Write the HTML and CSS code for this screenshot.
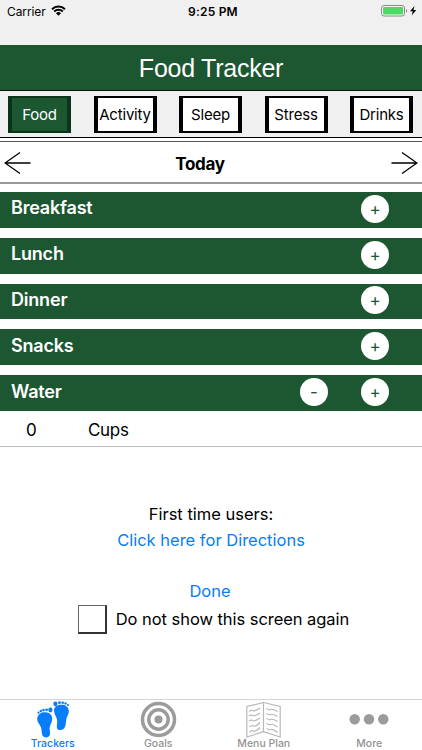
FILE: index.html
```
<!DOCTYPE html>
<html lang="en">
<head>
    <meta charset="UTF-8">
    <meta name="viewport" content="width=device-width, initial-scale=1.0">
    <title>Food Tracker</title>
    <link rel="stylesheet" href="styles.css">
</head>
<body>

    <div class="status-bar">
        <div class="carrier">
            <span>Carrier</span>
            <svg width="15" height="11" viewBox="0 0 15 11">
                <path d="M1 4.2a9.2 9.2 0 0 1 13 0M3.2 6.5a6.1 6.1 0 0 1 8.6 0" fill="none" stroke="#000" stroke-width="2"/>
                <path d="M7.5 10.7 5 8.2a3.6 3.6 0 0 1 5 0z"/>
            </svg>
        </div>
        <span class="clock">9:25 PM</span>
        <div class="battery">
            <svg width="36" height="12" viewBox="0 0 36 12">
                <rect x="0.5" y="0.5" width="23" height="10.5" rx="2.5" fill="#f8f8f8" stroke="#8a8a8a"/>
                <rect x="2" y="2" width="20" height="7.5" rx="1" fill="#4cd964"/>
                <path d="M25 4v3.6q1.2-.4 1.2-1.8T25 4z" fill="#8a8a8a"/>
                <path d="M33.5 1 29 6.3h2.8L30.7 10.5 35.3 5h-2.8z"/>
            </svg>
        </div>
    </div>

    <h1>Food Tracker</h1>

    <div class="tabs">
        <button class="active">Food</button>
        <button>Activity</button>
        <button>Sleep</button>
        <button>Stress</button>
        <button>Drinks</button>
    </div>

    <div class="date-bar">
        <svg width="27" height="24" viewBox="0 0 27 24">
            <path d="M26.5 12H1M16 1.5 1 12l15 10.5" fill="none" stroke="#000" stroke-width="1.3"/>
        </svg>
        <span>Today</span>
        <svg width="27" height="24" viewBox="0 0 27 24">
            <path d="M.5 12H26M11 1.5 26 12 11 22.5" fill="none" stroke="#000" stroke-width="1.3"/>
        </svg>
    </div>

    <div class="meals">
        <div class="meal"><h2>Breakfast</h2><button>+</button></div>
        <div class="meal"><h2>Lunch</h2><button>+</button></div>
        <div class="meal"><h2>Dinner</h2><button>+</button></div>
        <div class="meal"><h2>Snacks</h2><button>+</button></div>
        <div class="meal"><h2>Water</h2><button>-</button><button>+</button></div>
    </div>

    <div class="water-count">
        <span class="amount">0</span>
        <span>Cups</span>
    </div>

    <div class="directions">
        <p class="intro">First time users:</p>
        <a class="link">Click here for Directions</a>
        <a class="done">Done</a>
        <div class="dismiss">
            <span class="checkbox"></span>
            <span>Do not show this screen again</span>
        </div>
    </div>

    <div class="bottom-nav">
        <div class="nav-item selected">
            <svg width="34" height="37" viewBox="0 0 34 37" fill="#087df8">
                <path d="M1.3 17c.8-4.3 4.3-6.1 8.3-5.7 4.8.5 7.2 3.7 6.5 8-.5 3-2.3 4.7-2.5 8-.1 2.9 1.3 4.8-.2 7.4-1.5 2.5-6 2.2-7.1-.8-1-3-.2-4.9-1.7-8.4-1.2-3-4-4.7-3.3-8.5z"/>
                <ellipse cx="14.4" cy="9" rx="2.1" ry="2.4"/>
                <circle cx="10.6" cy="8.8" r="1.4"/>
                <circle cx="7.5" cy="9.1" r="1.3"/>
                <circle cx="4.8" cy="10" r="1.2"/>
                <circle cx="2.5" cy="11.7" r="1.1"/>
                <path d="M18.2 11c-.6-4.2 1.6-6.8 6-7.2 4.7-.4 7.9 1.6 8.5 5.3.6 3.5-1.5 5.6-2.3 9-.7 3-.1 6-2 9-1.7 2.7-6.500 2.700-7.400-.2-.7-2.600.6-4.800.1-8-.5-3-2.500-4.800-2.900-7.900z"/>
                <ellipse cx="19.4" cy="2.8" rx="2.1" ry="2.4"/>
                <circle cx="23.5" cy="1.7" r="1.4"/>
                <circle cx="26.7" cy="1.7" r="1.3"/>
                <circle cx="29.5" cy="2.4" r="1.2"/>
                <circle cx="31.9" cy="4" r="1.1"/>
            </svg>
            <span>Trackers</span>
        </div>
        <div class="nav-item">
            <svg width="37" height="37" viewBox="0 0 37 37" fill="none" stroke="#9b9b9b" stroke-width="3.5">
                <circle cx="18.5" cy="18.5" r="16"/>
                <circle cx="18.5" cy="18.5" r="9.7"/>
                <circle cx="18.5" cy="18.5" r="4" fill="#9b9b9b" stroke="none"/>
            </svg>
            <span>Goals</span>
        </div>
        <div class="nav-item">
            <svg width="35" height="37" viewBox="0 0 35 37" fill="none" stroke="#b8b8b8" stroke-width="1.2">
                <path d="M17.5 1.5.8 5.5V36l16.7-5.3L34.2 36V5.5zM17.5 1.5v29.2"/>
                <path d="M3 10.5q2-1.5 4-.8t7-2.7M3 15q2-1.5 4-.5t7-2.5M3 20q2-1.5 4-.5t7-2.5M3.5 26q2-2 4-1t6.5-3.5M3.5 31q2-2 4-1t6.5-3.5"/>
                <path d="M20.5 7q2 2.5 4 1.5t7 2M20.5 12q2 2.5 4 1.5t7 2M20.5 17q2 2.5 4 1.5t7 2M20.5 22q2 2.5 4 1.5t7 2.5M20.5 27q2 2.5 4 1.5t7 3"/>
            </svg>
            <span>Menu Plan</span>
        </div>
        <div class="nav-item">
            <svg width="40" height="37" viewBox="0 0 40 37" fill="#9b9b9b">
                <circle cx="5.7" cy="18.3" r="5.2"/>
                <circle cx="20" cy="18.3" r="5.2"/>
                <circle cx="34.3" cy="18.3" r="5.2"/>
            </svg>
            <span>More</span>
        </div>
    </div>

</body>
</html>
```

FILE: styles.css
```
* {
    box-sizing: border-box;
}

body {
    margin: 0;
    height: 750px;
    display: flex;
    flex-direction: column;
    font-family: Inter, sans-serif;
    font-size: 17px;
    color: #000;
    background-color: #fff;
    overflow: hidden;
}

button {
    font-family: inherit;
    padding: 0;
    background-color: #fff;
}

svg {
    display: block;
}

.status-bar {
    height: 45px;
    padding: 4px 5px 0 7px;
    display: grid;
    grid-template-columns: 1fr auto 1fr;
    align-items: start;
    background-color: #f0f0f0;
    font-size: 12px;
    line-height: 15px;
}

.carrier {
    display: flex;
    gap: 5px;
    letter-spacing: -0.1px;
}

.carrier svg {
    margin-top: 1px;
}

.clock {
    padding-left: 2px;
    font-weight: 600;
    letter-spacing: 0.2px;
}

.battery {
    display: flex;
    justify-content: flex-end;
    padding-top: 1px;
}

h1 {
    height: 46px;
    margin: 0;
    border-bottom: 1px solid #111;
    background-color: #1c5732;
    color: #fff;
    font-family: "Liberation Sans", Arial, sans-serif;
    font-size: 25px;
    font-weight: normal;
    letter-spacing: -0.25px;
    line-height: 46px;
    text-align: center;
}

.tabs {
    height: 47px;
    padding: 5px 9px 0 8px;
    display: flex;
    justify-content: space-between;
    align-items: flex-start;
    background-color: #f0f0f0;
    border-bottom: 1px solid #000;
}

.tabs button {
    width: 63px;
    height: 37px;
    border: solid #000;
    border-width: 2px 4px;
    display: flex;
    justify-content: center;
    align-items: center;
    font-size: 15px;
    letter-spacing: -0.2px;
    color: #000;
    white-space: nowrap;
}

.tabs .active {
    background-color: #1c5732;
    border-color: #0b351a;
    color: #fff;
}

.date-bar {
    height: 43px;
    margin-top: 3px;
    padding: 1px 4px 0;
    display: flex;
    justify-content: space-between;
    align-items: center;
    border-top: 1px solid #555;
    border-bottom: 2px solid #999;
    font-weight: 700;
    letter-spacing: -0.3px;
}

.date-bar span {
    padding-top: 2px;
    margin-right: 22px;
}

.meals {
    padding-top: 8px;
    display: flex;
    flex-direction: column;
    gap: 10px;
}

.meal {
    height: 35.8px;
    padding: 0 33px 2px 11px;
    display: flex;
    align-items: center;
    gap: 33px;
    background-color: #1c5732;
}

.meal h2 {
    flex: 1;
    margin: 0;
    padding-bottom: 2px;
    color: #fff;
    font-size: 18px;
    font-weight: 600;
    letter-spacing: -0.2px;
}

.meal button {
    width: 28px;
    height: 28px;
    border: none;
    border-radius: 50%;
    color: #1c5732;
    font-size: 17px;
    line-height: 28px;
}

.water-count {
    height: 36px;
    padding: 3px 0 0 26px;
    display: flex;
    align-items: center;
    border-bottom: 1px solid #bbb;
    letter-spacing: -0.3px;
}

.amount {
    width: 62px;
}

.directions {
    flex: 1;
    padding-top: 54px;
    display: flex;
    flex-direction: column;
    align-items: center;
    font-size: 16.5px;
    line-height: 26px;
}

.intro {
    margin: 0;
}

.link,
.done {
    color: #087df8;
}

.done {
    margin-top: 25px;
    padding-right: 2px;
}

.dismiss {
    padding: 1px 0 0 5px;
    display: flex;
    align-items: center;
    gap: 9px;
    letter-spacing: -0.05px;
}

.checkbox {
    width: 29px;
    height: 29px;
    border: 1px solid #666;
    border-right: 2px solid #333;
    border-bottom: 2px solid #333;
}

.bottom-nav {
    height: 51px;
    padding-top: 1px;
    display: grid;
    grid-template-columns: repeat(4, 1fr);
    border-top: 1px solid #d5d5d5;
}

.nav-item {
    display: flex;
    flex-direction: column;
    align-items: center;
    color: #929292;
    font-size: 10.5px;
    font-weight: 500;
    line-height: 12px;
}

.selected {
    color: #087df8;
}
```
